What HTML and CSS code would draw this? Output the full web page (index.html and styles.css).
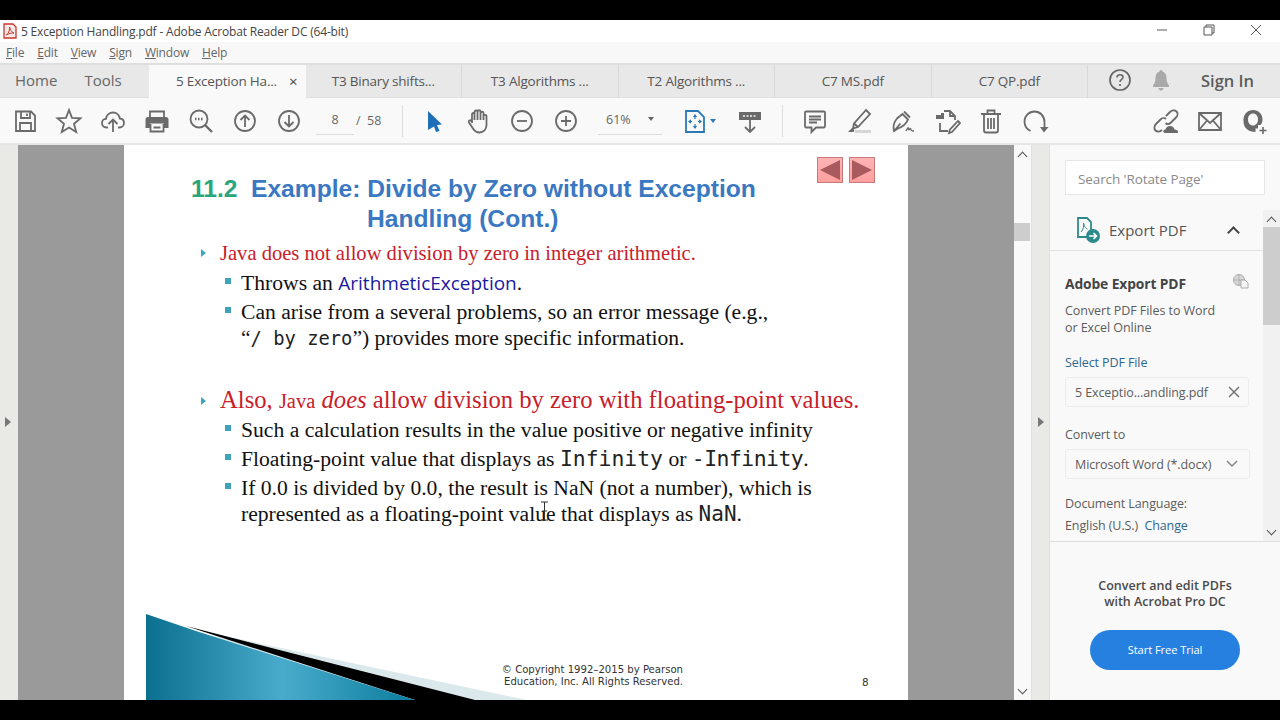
FILE: index.html
```html
<!DOCTYPE html>
<html lang="en">
<head>
    <meta charset="UTF-8">
    <title>5 Exception Handling.pdf - Adobe Acrobat Reader DC (64-bit)</title>
    <link rel="stylesheet" href="styles.css">
</head>
<body>
    <div class="letterbox"></div>
    <div class="app">
        <div class="titlebar">
            <svg class="pdf-icon" width="14" height="16" viewBox="0 0 14 16"><path d="M1 1H10L13 4V15H1Z" fill="#fbe9e7" stroke="#c8372d" stroke-width="1.3"/><path d="M3.500 12C6 10 7 6 6.500 4C8 8 9 9.500 11 10C8.500 9.800 6 10.500 3.500 12Z" fill="none" stroke="#c8372d"/></svg>
            <span class="title-text">5 Exception Handling.pdf - Adobe Acrobat Reader DC (64-bit)</span>
            <div class="window-btns">
                <svg width="12" height="12" viewBox="0 0 12 12"><path d="M1 6H11" stroke="#777" stroke-width="1.2"/></svg>
                <svg width="12" height="12" viewBox="0 0 12 12"><path d="M1 3H9V11H1ZM3 3V1H11V9H9" fill="none" stroke="#555"/></svg>
                <svg width="12" height="12" viewBox="0 0 12 12"><path d="M1 1L11 11M11 1L1 11" stroke="#555"/></svg>
            </div>
        </div>
        <div class="menubar">
            <span><u>F</u>ile</span>
            <span><u>E</u>dit</span>
            <span><u>V</u>iew</span>
            <span><u>S</u>ign</span>
            <span><u>W</u>indow</span>
            <span><u>H</u>elp</span>
        </div>
        <div class="tabbar">
            <div class="nav-tabs">
                <span class="nav-home">Home</span>
                <span class="nav-tools">Tools</span>
            </div>
            <div class="tab active"><span>5 Exception Ha...</span><span class="tab-close">×</span></div>
            <div class="tab">T3 Binary shifts...</div>
            <div class="tab">T3 Algorithms ...</div>
            <div class="tab">T2 Algorithms ...</div>
            <div class="tab">C7 MS.pdf</div>
            <div class="tab">C7 QP.pdf</div>
            <div class="tab-right">
                <svg class="help-icon" width="24" height="24" viewBox="0 0 24 24"><circle cx="12" cy="12" r="10" fill="none" stroke="#666" stroke-width="1.700"/><path d="M9 9.500C9 7.500 10.500 6.800 12 6.800C13.800 6.800 15 8 15 9.300C15 11.300 12 11.500 12 14" fill="none" stroke="#666" stroke-width="1.600"/><circle cx="12" cy="17" r="1.100" fill="#666"/></svg>
                <svg class="bell-icon" width="20" height="24" viewBox="0 0 20 24"><path d="M10 2C11 2 11.500 2.800 11.500 3.600C14.500 4.500 15.500 7 15.500 10C15.500 14 17 16 18 17.500V19H2V17.500C3 16 4.500 14 4.500 10C4.500 7 5.500 4.500 8.500 3.600C8.500 2.800 9 2 10 2ZM7.500 20H12.500C12.500 21.500 11.500 22.500 10 22.500C8.500 22.500 7.500 21.500 7.500 20Z" fill="#a9a9a9"/></svg>
                <span class="sign-in">Sign In</span>
            </div>
        </div>
        <div class="toolbar">
            <div class="tool"><svg class="ico" viewBox="0 0 28 28"><path d="M5 4.500H20L24 8.500V24H5Z"/><path d="M10 4.500V11H19V4.500M16 6.500V9M9 24V16H20V24"/></svg></div>
            <div class="tool"><svg class="ico" viewBox="0 0 28 28"><path d="M14 3L17 10.800L25.500 11.300L19 16.700L21.200 25L14 20.500L6.800 25L9 16.700L2.500 11.300L11 10.800Z"/></svg></div>
            <div class="tool"><svg class="ico" viewBox="0 0 28 28"><path d="M9 20.500H7.500C4.500 20.500 3 18.300 3 16C3 13.500 5 11.800 7 11.800C7.500 8 10.500 5.500 14 5.500C17.500 5.500 20.300 8 20.800 11.500C23.300 11.700 25 13.700 25 16C25 18.500 23 20.500 20.500 20.500H19"/><path d="M14 25V13M9.500 17L14 12.500L18.500 17"/></svg></div>
            <div class="tool"><svg class="ico" viewBox="0 0 28 28"><path d="M7 10V4.500H21V10"/><path class="solid" d="M5 10H23C24.500 10 25.500 11 25.500 12.500V21H21V16.500H7V21H2.500V12.500C2.500 11 3.500 10 5 10Z"/><path d="M7.500 17V24.500H20.500V17M10.500 20.500H17.500"/></svg></div>
            <div class="tool"><svg class="ico" viewBox="0 0 28 28"><circle cx="12" cy="12" r="8.500"/><path class="thick" d="M18 18L25 25"/><path class="thick" stroke-dasharray="1.500 1.500" d="M8 12H16.500"/></svg></div>
            <div class="tool"><svg class="ico" viewBox="0 0 28 28"><circle cx="14" cy="14" r="10"/><path d="M14 20V8.500M9.500 13L14 8.500L18.500 13"/></svg></div>
            <div class="tool"><svg class="ico" viewBox="0 0 28 28"><circle cx="14" cy="14" r="10"/><path d="M14 8V19.500M9.500 15L14 19.500L18.500 15"/></svg></div>
            <div class="page-box">
                <span class="page-num">8</span>
                <span class="page-total">/&nbsp;&nbsp;58</span>
            </div>
            <div class="tool-sep tool-sep-first"></div>
            <div class="tool"><svg class="ico" viewBox="0 0 28 28"><path class="blue-fill" d="M8 4L22 17.500L17 18L19.500 24L16 25L14 19.500L8 23Z"/></svg></div>
            <div class="tool"><svg class="ico" viewBox="0 0 28 28"><path d="M8 16V7.500C8 5.500 10.500 5.500 10.500 7.500V13M10.500 13V5C10.500 3 13.500 3 13.500 5V13M13.500 13V4.500C13.500 2.800 16.500 2.800 16.500 4.500V13M16.500 13V6C16.500 4.300 19.500 4.300 19.500 6V13M19.500 13V9C19.500 7.500 22.500 7.500 22.500 9V18C22.500 22.500 19.500 25.500 15.500 25.500C12 25.500 10.500 24 9 21.500L5 15.500C4 13.500 6 12.500 7.500 14L8 15"/></svg></div>
            <div class="tool"><svg class="ico" viewBox="0 0 28 28"><circle cx="14" cy="14" r="10"/><path d="M9 14H19"/></svg></div>
            <div class="tool"><svg class="ico" viewBox="0 0 28 28"><circle cx="14" cy="14" r="10"/><path d="M9 14H19M14 9V19"/></svg></div>
            <div class="zoom-box">
                <span class="zoom-val">61%</span>
                <span class="caret"></span>
            </div>
            <div class="tool fit-tool">
                <svg class="ico blue" viewBox="0 0 28 28"><path d="M5 4H17L23 10V25H5Z"/><path d="M14 8V12M12.500 10L14 8L15.500 10M14 21V17M12.500 19L14 21L15.500 19M8 14.500H11M10 13L8 14.500L10 16M20 14.500H17M18 13L20 14.500L18 16" stroke-width="1.200"/></svg>
                <span class="caret blue-caret"></span>
            </div>
            <div class="tool"><svg class="ico" viewBox="0 0 28 28"><path class="solid" d="M3 5H25V13H3Z"/><path d="M14 13V25M9 20L14 25L19 20"/><path class="dots" d="M7 9H21" stroke-dasharray="2 1.500"/></svg></div>
            <div class="tool-sep"></div>
            <div class="tool"><svg class="ico" viewBox="0 0 28 28"><path d="M5 4.500H23C23.800 4.500 24 5 24 5.500V19C24 20 23.500 20.500 23 20.500H15L10.500 25V20.500H5C4.500 20.500 4 20 4 19V5.500C4 5 4.500 4.500 5 4.500Z"/><path d="M8 9.500H20M8 12.500H20M8 15.500H16"/></svg></div>
            <div class="tool"><svg class="ico" viewBox="0 0 28 28"><path d="M21 3L25 7L13 20L8 21.500L9 16.500Z"/><path d="M9 16.500L13 20"/><path class="solid" d="M3 25L7 21L9.500 23L8.500 25Z"/><path class="light" d="M10 24.500H26"/></svg></div>
            <div class="tool"><svg class="ico" viewBox="0 0 28 28"><path d="M13.500 7L19 12.500C17.500 16 15 19.500 9 21.500L5 24C4 20 5 15 8 11.500ZM15 4.500L21 10.500M5 24L11.500 16.500"/><path d="M17 24C18.500 21 19.500 19.500 19.500 22C19.500 24 21 22 21.500 21C21.500 23 23 24 25 24" stroke-width="1.300"/></svg></div>
            <div class="tool"><svg class="ico" viewBox="0 0 28 28"><path class="solid" d="M3 8H8V6H11V12H3Z"/><path d="M11 4H17L22 9V13M17 4V9H22M7 16V24H15"/><path d="M25 14L27 16L19 25L16 26L17 22.500Z"/></svg></div>
            <div class="tool"><svg class="ico" viewBox="0 0 28 28"><path d="M4 7H24M10.500 7V3.500H17.500V7M7 7V23.500C7 24.500 8 25.500 9 25.500H19C20 25.500 21 24.500 21 23.500V7M11 11V22M14 11V22M17 11V22"/></svg></div>
            <div class="tool"><svg class="ico" viewBox="0 0 28 28"><path d="M9.500 24C5.500 22 3.500 18.500 3.500 14.500C3.500 9 8 4.500 13.500 4.500C19 4.500 23.500 9 23.500 15V20"/><path class="solid" d="M19 19H27.500L23 24.500Z" transform="translate(0 1)"/></svg></div>
            <div class="tool-gap"></div>
            <div class="tool"><svg class="ico" viewBox="0 0 28 28"><path d="M14 9L18 5C20 3 23 3 24.500 4.500C26 6 26 8.500 24 10.500L19 15.500C17 17.500 15 17.500 13.500 16M14 12C12.500 10.500 10 11 8.500 12.500L4 17C2 19 2 22 3.500 23.500C5 25 8 25 10 23"/><path class="solid" d="M13 26C11.500 26 11 24.500 11.500 23.500C12 22.500 13 22.500 13.500 22.500C14 20.500 15.500 19 18 19C20.500 19 22 20.500 22.500 22.500C24.500 22.500 26 23.500 26 24.500C26 25.500 25.500 26 24.500 26Z"/></svg></div>
            <div class="tool"><svg class="ico" viewBox="0 0 28 28"><path d="M3 6H25V23H3ZM3 6L14 16L25 6M3 23L11 13.500M25 23L17 13.500"/></svg></div>
            <div class="tool"><svg class="ico" viewBox="0 0 28 28"><path class="solid" d="M13 3C18.500 3 22.500 7 22.500 12.500C22.500 15 21.500 17 20.500 18H18V21.500H15.500V25C9 25 3.500 21.500 3.500 14V12.500C3.500 7 8 3 13 3ZM13 6.500C10 6.500 8 9 8 12.500C8 16 10 18.500 13 18.500C16 18.500 18 16 18 12.500C18 9 16 6.500 13 6.500Z"/><path class="thin-plus" d="M23 20V27M19.500 23.500H26.500"/></svg></div>
        </div>

        <div class="workspace">
            <div class="left-strip"><span class="strip-arrow"></span></div>
            <div class="doc-area">
                <div class="slide">
                    <div class="slide-nav">
                        <div class="nav-btn"><span class="arrow-left"></span></div>
                        <div class="nav-btn"><span class="arrow-right"></span></div>
                    </div>
                    <h1 class="slide-title"><span class="title-num">11.2</span><span>Example: Divide by Zero without Exception</span><span class="title-second">Handling (Cont.)</span></h1>
                    <div class="point red-text">Java does not allow division by zero in integer arithmetic.</div>
                    <div class="sub">Throws an <span class="code-blue">ArithmeticException</span>.</div>
                    <div class="sub">Can arise from a several problems, so an error message (e.g.,</div>
                    <div class="sub-more">“<span class="mono mono-small">/ by zero</span>”) provides more specific information.</div>
                    <div class="point point-big red-text">Also, <span class="red-small">Java</span> <em>does</em> allow division by zero with floating-point values.</div>
                    <div class="sub">Such a calculation results in the value positive or negative infinity</div>
                    <div class="sub">Floating-point value that displays as <span class="mono">Infinity</span> or <span class="mono neg">-Infinity</span>.</div>
                    <div class="sub">If 0.0 is divided by 0.0, the result is NaN (not a number), which is</div>
                    <div class="sub-more">represented as a floating-point value that displays as <span class="mono nan">NaN</span>.</div>
                    <svg class="slide-art" width="420" height="87" viewBox="0 0 420 87">
                        <defs>
                            <linearGradient id="tealFade" x1="0" y1="0" x2="1" y2="0">
                                <stop offset="0" stop-color="#0b6f8f"/>
                                <stop offset="0.5" stop-color="#49abcc"/>
                                <stop offset="1" stop-color="#0a7c9c"/>
                            </linearGradient>
                        </defs>
                        <path d="M60 18L385 87H200Z" fill="#dbe8ec"/>
                        <path d="M40 12L333 87H272Z" fill="#000"/>
                        <path d="M0 0L50 17L272 87H0Z" fill="url(#tealFade)"/>
                    </svg>
                    <div class="slide-copy">© Copyright 1992–2015 by Pearson<br>Education, Inc. All Rights Reserved.</div>
                    <div class="slide-page">8</div>
                    <svg class="ibeam" width="11" height="20" viewBox="0 0 11 20"><path d="M2 1H9M5.500 1V19M2 19H9M3 10H8" stroke="#333" fill="none"/></svg>
                </div>
            </div>
            <div class="doc-scroll">
                <span class="chev-up"></span>
                <span class="doc-thumb"></span>
                <span class="chev-down"></span>
            </div>
            <div class="right-strip"><span class="strip-arrow"></span></div>
            <aside class="panel">
                <div class="search-wrap">
                    <div class="search-box">Search 'Rotate Page'</div>
                </div>
                <div class="panel-mid">
                    <div class="panel-main">
                        <div class="export-head">
                            <svg width="24" height="26" viewBox="0 0 24 26"><path d="M15 17V5L11 1H2V20H11" fill="none" stroke="#2d8a8a" stroke-width="1.800"/><path d="M5 15C7.500 13 8 8 7.500 6C8.500 10 9.500 11 11.500 12" fill="none" stroke="#2d8a8a"/><circle cx="17" cy="19" r="7" fill="#2d8a8a"/><path d="M13 19H20M17.500 16L20.500 19L17.500 22" fill="none" stroke="#fff" stroke-width="1.600"/></svg>
                            <span class="export-label">Export PDF</span>
                            <span class="chev-big"></span>
                        </div>
                        <div class="export-body">
                            <div class="export-title-row">
                                <span class="export-title">Adobe Export PDF</span>
                                <svg class="globe-icon" width="16" height="15" viewBox="0 0 16 15"><circle cx="6" cy="6" r="5.500" fill="#d8d8d8" stroke="#aaa"/><path d="M1 6H11M6 1V11" stroke="#aaa" stroke-width="0.800"/><path d="M8 6H12L15 9V14H8Z" fill="#f4f4f4" stroke="#aaa"/></svg>
                            </div>
                            <p class="export-desc">Convert PDF Files to Word<br>or Excel Online</p>
                            <div class="link-label">Select PDF File</div>
                            <div class="field">
                                <span>5 Exceptio...andling.pdf</span>
                                <svg width="12" height="12" viewBox="0 0 12 12"><path d="M1 1L11 11M11 1L1 11" stroke="#777" stroke-width="1.500"/></svg>
                            </div>
                            <div class="convert-label">Convert to</div>
                            <div class="field field-select">
                                <span>Microsoft Word (*.docx)</span>
                                <svg width="12" height="8" viewBox="0 0 12 8"><path d="M1 1L6 6L11 1" stroke="#888" stroke-width="1.500" fill="none"/></svg>
                            </div>
                            <div class="lang-label">Document Language:</div>
                            <div class="lang-value">English (U.S.) &nbsp;<span class="link-text">Change</span></div>
                        </div>
                    </div>
                    <div class="panel-scroll">
                        <span class="chev-up"></span>
                        <span class="panel-thumb"></span>
                        <span class="chev-down"></span>
                    </div>
                </div>
                <div class="promo">
                    <p class="promo-text">Convert and edit PDFs<br>with Acrobat Pro DC</p>
                    <div class="trial-btn">Start Free Trial</div>
                </div>
            </aside>
        </div>
    </div>
    <div class="letterbox"></div>
</body>
</html>
```

FILE: styles.css
```css
* {
    box-sizing: border-box;
}
body {
    margin: 0;
    height: 720px;
    overflow: hidden;
    display: flex;
    flex-direction: column;
    font-family: "Open Sans", sans-serif;
    color: #555;
    background: #000;
}
.letterbox {
    height: 20px;
    background: #000;
    flex: none;
}
.app {
    height: 680px;
    display: flex;
    flex-direction: column;
    overflow: hidden;
    background: #f9f9f9;
}

/* window chrome */
.titlebar {
    height: 22px;
    background: #fff;
    display: flex;
    align-items: center;
    padding-left: 3px;
    color: #444;
    flex: none;
}
.pdf-icon {
    margin-right: 4px;
}
.title-text {
    font-size: 12px;
    letter-spacing: -0.18px;
}
.window-btns {
    margin-left: auto;
    display: flex;
    gap: 35px;
    padding-right: 18px;
    padding-bottom: 2px;
}
.menubar {
    height: 21px;
    background: #f8f8f8;
    display: flex;
    gap: 13px;
    align-items: center;
    padding-left: 6px;
    font-size: 12px;
    letter-spacing: -0.2px;
    color: #666;
    flex: none;
}
.tabbar {
    height: 35px;
    display: flex;
    background: #e8e8e8;
    border-top: 2px solid #dedede;
    flex: none;
}
.nav-tabs {
    width: 149px;
    display: flex;
    align-items: center;
    padding: 0 0 2px 15px;
    gap: 27px;
    font-size: 15px;
    color: #666;
    border-bottom: 1px solid #e0e0e0;
}
.tab {
    width: 156.500px;
    display: flex;
    align-items: center;
    justify-content: center;
    padding-bottom: 1px;
    font-size: 13.500px;
    letter-spacing: -0.2px;
    color: #555;
    border-right: 1px solid #d9d9d9;
    border-bottom: 1px solid #e0e0e0;
}
.tab.active {
    background: #f9f9f9;
    border: none;
    justify-content: flex-start;
    padding-left: 27px;
}
.tab-close {
    margin-left: 12px;
    font-size: 15px;
    color: #444;
}
.tab-right {
    flex: 1;
    display: flex;
    align-items: center;
    padding-bottom: 2px;
    border-bottom: 1px solid #e0e0e0;
}
.help-icon {
    margin-left: 20px;
}
.bell-icon {
    margin-left: 19px;
}
.sign-in {
    margin-left: 30px;
    font-size: 16.500px;
    font-weight: 600;
    color: #5c5c5c;
}

/* toolbar */
.toolbar {
    height: 47px;
    display: flex;
    align-items: center;
    padding: 0 4px 0 3px;
    border-bottom: 2px solid #e6e6e6;
    flex: none;
}
.tool {
    width: 44px;
    display: flex;
    justify-content: center;
    align-items: center;
    flex: none;
}
.ico {
    width: 28px;
    height: 28px;
    fill: none;
    stroke: #6a6a6a;
    stroke-width: 1.800;
}
.ico .solid {
    fill: #6a6a6a;
    stroke: none;
}
.ico .thick {
    stroke-width: 2.400;
}
.ico .thin-plus {
    stroke-width: 1.600;
}
.ico .dots {
    stroke: #f4f4f4;
    stroke-width: 1.500;
}
.ico .light {
    stroke: #d6d6d6;
    stroke-width: 3;
}
.ico .blue-fill {
    fill: #1f6fb8;
    stroke: none;
}
.ico.blue {
    stroke: #2b78b8;
}
.page-box {
    width: 81px;
    display: flex;
    align-items: center;
    font-size: 12.500px;
    color: #666;
    flex: none;
}
.page-num {
    width: 38px;
    margin-left: 5px;
    padding: 4px 0 6px;
    text-align: center;
    border-bottom: 1px solid #ddd;
}
.page-total {
    margin-left: 2px;
    padding-bottom: 1px;
}
.tool-sep {
    width: 1px;
    height: 32px;
    background: #ddd;
    margin: 0 10px;
    flex: none;
}
.tool-sep-first {
    margin-right: 9px;
}
.zoom-box {
    width: 64px;
    margin-left: 10px;
    margin-right: 11px;
    display: flex;
    align-items: center;
    justify-content: space-between;
    padding: 4px 8px 6px 8px;
    font-size: 12.500px;
    color: #666;
    border-bottom: 1px solid #ddd;
    flex: none;
}
.caret {
    width: 0;
    height: 0;
    border-left: 3.500px solid transparent;
    border-right: 3.500px solid transparent;
    border-top: 4px solid #666;
}
.fit-tool {
    position: relative;
    margin-right: 11px;
}
.blue-caret {
    position: absolute;
    right: 1px;
    top: 12px;
    border-top-color: #2b78b8;
}
.tool-gap {
    flex: 1;
}

/* document */
.workspace {
    flex: 1;
    display: flex;
    min-height: 0;
}
.left-strip,
.right-strip {
    background: #e9e9e6;
    display: flex;
    align-items: center;
    flex: none;
    padding-bottom: 2px;
}
.left-strip {
    width: 18px;
    padding-left: 5px;
}
.right-strip {
    width: 19px;
    padding-left: 6px;
    border-left: 1px solid #e0e0e0;
    border-right: 1px solid #e0e0e0;
}
.strip-arrow {
    width: 0;
    height: 0;
    border-top: 5px solid transparent;
    border-bottom: 5px solid transparent;
    border-left: 6px solid #777;
}
.doc-area {
    width: 996px;
    padding-left: 106px;
    background: #9a9a9a;
    flex: none;
    overflow: hidden;
}
.slide {
    position: relative;
    width: 784px;
    height: 555px;
    background: #fff;
    padding-top: 29px;
    font-family: "Liberation Serif", serif;
    color: #111;
    overflow: hidden;
}
.slide-nav {
    position: absolute;
    left: 693px;
    top: 12px;
    display: flex;
    gap: 6px;
}
.nav-btn {
    width: 26px;
    height: 26px;
    background: linear-gradient(#ffb4b4, #ff9f9f);
    border: 1px solid #c87a7a;
    display: flex;
    align-items: center;
    justify-content: center;
}
.arrow-left {
    border-top: 10px solid transparent;
    border-bottom: 10px solid transparent;
    border-right: 20px solid #a85a5e;
}
.arrow-right {
    border-top: 10px solid transparent;
    border-bottom: 10px solid transparent;
    border-left: 20px solid #a85a5e;
}
.slide-title {
    margin: 0 0 6px 67px;
    font-family: "Liberation Sans", sans-serif;
    font-size: 24.630px;
    line-height: 30px;
    font-weight: bold;
    color: #3a78c2;
    display: grid;
    grid-template-columns: 60px auto;
}
.title-num {
    color: #2ba67c;
}
.title-second {
    grid-column: 2;
    margin-left: 116px;
}
.point {
    position: relative;
    margin-left: 96px;
    padding-bottom: 1px;
    font-size: 20.560px;
    line-height: 26px;
}
.point::before {
    content: "";
    position: absolute;
    left: -19px;
    top: 9px;
    border-top: 4px solid transparent;
    border-bottom: 4px solid transparent;
    border-left: 5px solid #3fa3bd;
}
.point-big {
    margin-top: 33px;
    margin-bottom: -2px;
    padding-bottom: 0;
    font-size: 24.650px;
    line-height: 30px;
}
.point-big::before {
    top: 12px;
}
.red-text {
    color: #c8202a;
}
.red-small {
    font-size: 20.500px;
}
.sub {
    position: relative;
    margin: 3px 0 0 117px;
    font-size: 21.630px;
    line-height: 26px;
}
.sub::before {
    content: "";
    position: absolute;
    left: -16px;
    top: 8px;
    width: 6px;
    height: 6px;
    background: #3fa3bd;
}
.sub-more {
    margin-left: 117px;
    font-size: 21.630px;
    line-height: 26px;
}
.code-blue {
    font-family: "Open Sans", sans-serif;
    font-size: 19px;
    color: #1a1aa0;
}
.mono {
    font-family: "DejaVu Sans Mono", monospace;
    font-size: 21.400px;
    color: #222;
}
.mono-small {
    font-size: 18.800px;
}
.neg {
    letter-spacing: -0.5px;
}
.nan {
    font-size: 21px;
}
.slide-art {
    position: absolute;
    left: 22px;
    bottom: -1px;
}
.slide-copy {
    position: absolute;
    left: 369px;
    top: 519px;
    width: 190px;
    text-align: right;
    font-family: "DejaVu Sans", sans-serif;
    font-size: 10.100px;
    line-height: 12px;
    color: #333;
}
.slide-page {
    position: absolute;
    left: 738px;
    top: 531px;
    font-family: "DejaVu Sans", sans-serif;
    font-size: 10.500px;
    line-height: 12px;
    color: #333;
}
.ibeam {
    position: absolute;
    left: 415px;
    top: 356px;
}
.doc-scroll {
    position: relative;
    width: 17px;
    background: #f9f9f9;
    flex: none;
}
.chev-up,
.chev-down {
    position: absolute;
    left: 5px;
    width: 7px;
    height: 7px;
    border-left: 1.800px solid #555;
    border-top: 1.800px solid #555;
}
.chev-up {
    top: 8px;
    transform: rotate(45deg);
}
.chev-down {
    bottom: 7px;
    transform: rotate(225deg);
}
.doc-thumb {
    position: absolute;
    left: 0;
    top: 78px;
    width: 16px;
    height: 18px;
    background: #cdcdcd;
}

/* right panel */
.panel {
    width: 230px;
    display: flex;
    flex-direction: column;
    flex: none;
    background: #f9f9f9;
}
.search-wrap {
    height: 65px;
    padding: 15px 15px 0;
    flex: none;
}
.search-box {
    height: 35px;
    background: #fff;
    border: 1px solid #e6e6e6;
    padding: 2px 0 0 12px;
    font-size: 13.500px;
    line-height: 33px;
    letter-spacing: -0.1px;
    color: #8a8a8a;
}
.panel-mid {
    height: 332px;
    display: flex;
    border-bottom: 1px solid #dedede;
    flex: none;
}
.panel-main {
    width: 213px;
    overflow: hidden;
}
.panel-scroll {
    position: relative;
    width: 17px;
    background: #f1f1f1;
}
.panel-thumb {
    position: absolute;
    left: 0;
    top: 17px;
    width: 17px;
    height: 98px;
    background: #cdcdcd;
}
.export-head {
    height: 41px;
    display: flex;
    align-items: center;
    padding-left: 26px;
    border-bottom: 1px solid #e2e2e2;
}
.export-label {
    margin-left: 9px;
    font-size: 15px;
    color: #555;
}
.chev-big {
    margin-left: 43px;
    margin-top: 5px;
    width: 9px;
    height: 9px;
    border-left: 2px solid #444;
    border-top: 2px solid #444;
    transform: rotate(45deg);
}
.export-body {
    padding: 22px 0 0 15px;
    font-size: 12.500px;
    color: #5c5c5c;
}
.export-title-row {
    display: flex;
    justify-content: space-between;
    align-items: center;
    height: 20px;
    font-size: 13.800px;
    font-weight: 700;
    color: #444;
    padding-right: 14px;
}
.export-title {
    letter-spacing: -0.1px;
}
.globe-icon {
    margin-bottom: 4px;
}
.export-desc {
    margin: 9px 0 0;
    line-height: 17px;
    letter-spacing: -0.05px;
}
.link-label {
    margin-top: 18px;
    height: 18px;
    color: #2f6790;
    letter-spacing: -0.1px;
}
.field {
    width: 184px;
    height: 30px;
    margin-top: 5px;
    border: 1px solid #ededed;
    border-radius: 3px;
    display: flex;
    align-items: center;
    justify-content: space-between;
    padding: 0 8px 0 9px;
    letter-spacing: -0.1px;
}
.convert-label {
    margin-top: 19px;
    letter-spacing: -0.1px;
}
.field-select {
    width: 185px;
    margin-top: 6px;
    padding-right: 11px;
}
.lang-label {
    margin-top: 16px;
    letter-spacing: -0.1px;
}
.lang-value {
    margin-top: 5px;
    letter-spacing: -0.1px;
}
.link-text {
    color: #2f6790;
}
.promo {
    flex: 1;
    padding-top: 36px;
    text-align: center;
}
.promo-text {
    margin: 0;
    font-size: 12.500px;
    font-weight: 600;
    line-height: 16px;
    color: #4a4a4a;
}
.trial-btn {
    width: 150px;
    height: 40px;
    margin: 20px auto 0;
    border-radius: 20px;
    background: #2680e0;
    color: #fff;
    font-size: 11.200px;
    line-height: 40px;
    letter-spacing: -0.1px;
}
```
